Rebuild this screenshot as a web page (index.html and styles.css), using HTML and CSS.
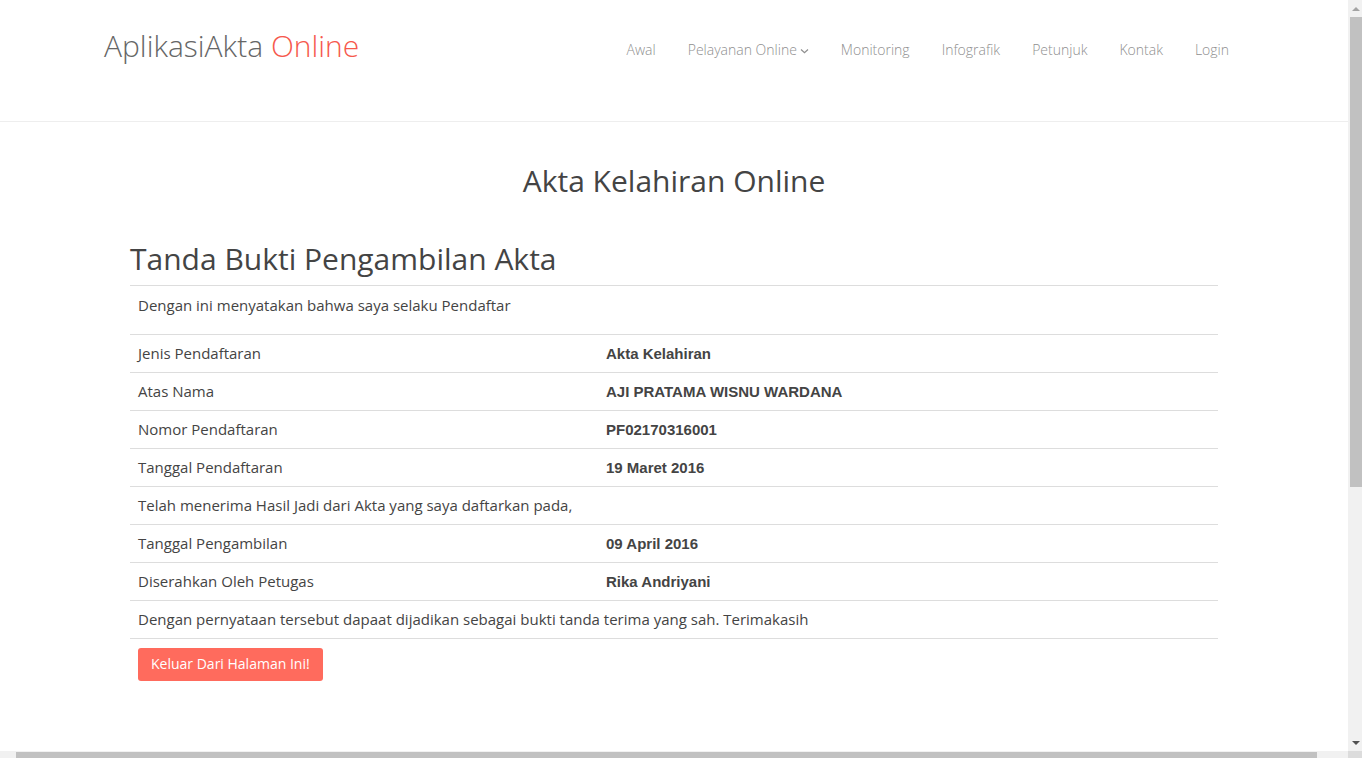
FILE: index.html
```html
<!DOCTYPE html>
<html lang="id">
<head>
<meta charset="utf-8">
<title>AplikasiAkta Online</title>
<link rel="stylesheet" href="styles.css">
</head>
<body>
<div class="screen">
  <div class="viewport">
    <header class="site-header">
      <div class="container header-inner">
        <a class="brand" href="#">AplikasiAkta <span class="brand-accent">Online</span></a>
        <nav class="main-nav">
          <a href="#">Awal</a>
          <a href="#">Pelayanan Online <svg class="chev" width="9" height="6" viewBox="0 0 9 6"><path d="M1 1.5 L4.5 4.8 L8 1.5" fill="none" stroke="currentColor" stroke-width="1.2"/></svg></a>
          <a href="#">Monitoring</a>
          <a href="#">Infografik</a>
          <a href="#">Petunjuk</a>
          <a href="#">Kontak</a>
          <a href="#">Login</a>
        </nav>
      </div>
    </header>
    <main class="content">
      <h1 class="page-title">Akta Kelahiran Online</h1>
      <section class="receipt">
        <h2 class="receipt-title">Tanda Bukti Pengambilan Akta</h2>
        <table class="receipt-table">
          <tr class="intro"><td colspan="2">Dengan ini menyatakan bahwa saya selaku Pendaftar</td></tr>
          <tr><td class="label">Jenis Pendaftaran</td><td class="value">Akta Kelahiran</td></tr>
          <tr><td class="label">Atas Nama</td><td class="value">AJI PRATAMA WISNU WARDANA</td></tr>
          <tr><td class="label">Nomor Pendaftaran</td><td class="value">PF02170316001</td></tr>
          <tr><td class="label">Tanggal Pendaftaran</td><td class="value">19 Maret 2016</td></tr>
          <tr><td colspan="2">Telah menerima Hasil Jadi dari Akta yang saya daftarkan pada,</td></tr>
          <tr><td class="label">Tanggal Pengambilan</td><td class="value">09 April 2016</td></tr>
          <tr><td class="label">Diserahkan Oleh Petugas</td><td class="value">Rika Andriyani</td></tr>
          <tr><td colspan="2">Dengan pernyataan tersebut dapaat dijadikan sebagai bukti tanda terima yang sah. Terimakasih</td></tr>
        </table>
        <a class="btn-exit" href="#">Keluar Dari Halaman Ini!</a>
      </section>
    </main>
  </div>
  <div class="vscroll">
    <div class="arrow-box"><span class="tri-up"></span></div>
    <div class="vthumb"></div>
    <div class="vtrack-rest"></div>
    <div class="arrow-box"><span class="tri-down"></span></div>
  </div>
  <div class="hscroll">
    <div class="harrow"></div>
    <div class="hthumb"></div>
    <div class="htrack-rest"></div>
    <div class="harrow"></div>
  </div>
  <div class="corner"></div>
</div>
</body>
</html>
```

FILE: styles.css
```css
* { box-sizing: border-box; }
html, body { margin: 0; padding: 0; overflow: hidden; }
body {
  font-family: "Open Sans", "Liberation Sans", sans-serif;
  font-size: 15px;
  color: #444;
  background: #fff;
}
a { text-decoration: none; }

.screen {
  display: grid;
  grid-template-columns: 1348px 14px;
  grid-template-rows: 751px 7px;
  width: 1362px;
  height: 758px;
  overflow: hidden;
}
.viewport { overflow: hidden; background: #fff; }

.container { width: 1170px; margin: 0 auto; padding: 0 15px; }

.site-header { height: 122px; border-bottom: 1px solid #eee; }
.header-inner { display: flex; justify-content: space-between; align-items: flex-start; }
.brand {
  font-weight: 300;
  font-size: 30px;
  line-height: 40px;
  color: #666;
  margin-top: 26px;
}
.brand-accent { color: #f6584c; }
.main-nav { display: flex; margin-top: 40px; }
.main-nav a {
  font-size: 14px;
  font-weight: 300;
  line-height: 20px;
  color: #8f8f8f;
  padding: 0 16px;
  display: flex;
  align-items: center;
  gap: 3px;
}
.main-nav a:last-child { padding-right: 15px; }
.chev { margin-top: 1px; }

.content { width: 1088px; margin: 0 auto; }
.page-title {
  margin: 39px 0 0;
  text-align: center;
  font-weight: 400;
  font-size: 30px;
  line-height: 40px;
  color: #444;
}
.receipt-title {
  margin: 38px 0 0;
  font-weight: 400;
  font-size: 30px;
  line-height: 40px;
  color: #444;
}
.receipt-table {
  width: 100%;
  border-collapse: collapse;
  margin-top: 6px;
}
.receipt-table td {
  border-top: 1px solid #ddd;
  padding: 8px 8px;
  height: 38px;
  line-height: 21px;
  vertical-align: middle;
  color: #444;
}
.receipt-table tr:last-child td { border-bottom: 1px solid #ddd; }
.receipt-table tr.intro td { height: 49px; padding-bottom: 18px; padding-top: 8px; }
.receipt-table td.label { width: 468px; }
.receipt-table td.value {
  font-family: "Liberation Sans", Arial, sans-serif;
  font-weight: 700;
  font-size: 15px;
  color: #444;
}

.btn-exit {
  display: inline-block;
  margin: 9px 0 0 8px;
  background: #ff6b5d;
  color: #fff;
  font-size: 14px;
  line-height: 20px;
  padding: 6px 13px 7px;
  border-radius: 3px;
}

/* scrollbars */
.vscroll { background: #f1f1f1; display: flex; flex-direction: column; }
.arrow-box { height: 17px; display: flex; align-items: center; justify-content: center; padding-left: 2px; }
.tri-up { width: 0; height: 0; border-left: 4px solid transparent; border-right: 4px solid transparent; border-bottom: 4px solid #a3a3a3; }
.tri-down { width: 0; height: 0; border-left: 4px solid transparent; border-right: 4px solid transparent; border-top: 4px solid #505050; }
.vthumb { height: 470px; margin-left: 2px; background: #c1c1c1; }
.vtrack-rest { flex: 1; }
.hscroll { background: #f1f1f1; display: flex; align-items: flex-end; }
.harrow { width: 16px; height: 7px; }
.hthumb { width: 1301px; height: 6px; background: #c1c1c1; }
.htrack-rest { flex: 1; }
.corner { background: #dcdcdc; }
```
